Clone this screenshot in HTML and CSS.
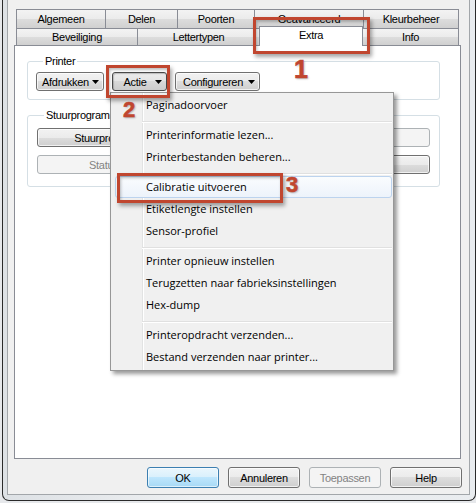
FILE: index.html
```html
<!DOCTYPE html>
<html lang="nl">
<head>
<meta charset="utf-8">
<title>Eigenschappen printer</title>
<link rel="stylesheet" href="styles.css">
</head>
<body>
<div class="window">
  <div class="dialog">
    <div class="tabctl">
      <div class="tabrow row1">
        <div class="tab w-alg">Algemeen</div>
        <div class="tab w-del">Delen</div>
        <div class="tab w-poo">Poorten</div>
        <div class="tab w-gea">Geavanceerd</div>
        <div class="tab w-kle">Kleurbeheer</div>
      </div>
      <div class="tabrow row2">
        <div class="tab w-bev">Beveiliging</div>
        <div class="tab w-let">Lettertypen</div>
        <div class="tab w-ext sel">Extra</div>
        <div class="tab w-inf">Info</div>
      </div>
      <div class="panel">
        <fieldset class="group g-printer">
          <legend>Printer</legend>
          <div class="btnrow">
            <button class="btn dd w-afd"><span class="lbl">Afdrukken</span><svg class="arr" width="7" height="4" viewBox="0 0 7 4"><polygon points="0,0 7,0 3.5,4" fill="#000"/></svg></button>
            <button class="btn dd w-act pressed"><span class="lbl">Actie</span><svg class="arr" width="7" height="4" viewBox="0 0 7 4"><polygon points="0,0 7,0 3.5,4" fill="#000"/></svg></button>
            <button class="btn dd w-con"><span class="lbl">Configureren</span><svg class="arr" width="7" height="4" viewBox="0 0 7 4"><polygon points="0,0 7,0 3.5,4" fill="#000"/></svg></button>
          </div>
        </fieldset>
        <fieldset class="group g-driver">
          <legend>Stuurprogramma</legend>
          <div class="grid2">
            <button class="btn">Stuurprogramma...</button>
            <button class="btn disabled">Opties...</button>
            <button class="btn disabled">Status lezen</button>
            <button class="btn">Bijwerken...</button>
          </div>
        </fieldset>
      </div>
    </div>
    <div class="footer">
      <button class="btn fbtn default">OK</button>
      <button class="btn fbtn">Annuleren</button>
      <button class="btn fbtn disabled">Toepassen</button>
      <button class="btn fbtn">Help</button>
    </div>
  </div>
</div>

<div class="menu">
  <div class="item">Paginadoorvoer</div>
  <div class="sep"></div>
  <div class="item">Printerinformatie lezen...</div>
  <div class="item">Printerbestanden beheren...</div>
  <div class="sep"></div>
  <div class="item hot">Calibratie uitvoeren</div>
  <div class="item">Etiketlengte instellen</div>
  <div class="item">Sensor-profiel</div>
  <div class="sep"></div>
  <div class="item">Printer opnieuw instellen</div>
  <div class="item">Terugzetten naar fabrieksinstellingen</div>
  <div class="item">Hex-dump</div>
  <div class="sep"></div>
  <div class="item">Printeropdracht verzenden...</div>
  <div class="item">Bestand verzenden naar printer...</div>
</div>

<div class="mark m1"></div>
<div class="mark m2"></div>
<div class="mark m3"></div>
<div class="num n1">1</div>
<div class="num n2">2</div>
<div class="num n3">3</div>
</body>
</html>
```
FILE: styles.css
```css
html, body {
  margin: 0;
  padding: 0;
}
body {
  position: relative;
  width: 476px;
  height: 503px;
  overflow: hidden;
  background: #e6e8eb;
  font-family: "Liberation Sans", Arial, sans-serif;
  font-size: 11px;
  letter-spacing: -0.3px;
  color: #000;
}
.window {
  margin-left: 2px;
  width: 474px;
  height: 501px;
  box-sizing: border-box;
  border: 1px solid #2a2a2a;
  border-top: 0;
  border-radius: 0 0 7px 7px;
  padding: 0 5px 5px 4px;
  background: linear-gradient(90deg, #dde1e5, #eef0f2 40%, #e9ecef);
}
.dialog {
  height: 100%;
  box-sizing: border-box;
  border: 1px solid #a2a6aa;
  border-top: 0;
  background: #f0f0f0;
  display: flex;
  flex-direction: column;
  padding: 9px 8px 0 6px;
}
.tabctl {
  width: 447px;
}
.tabrow {
  display: flex;
  padding-left: 2px;
}
.row2 {
  height: 17px;
  align-items: flex-end;
}
.tab {
  box-sizing: border-box;
  border: 1px solid #898c95;
  border-bottom: 0;
  margin-left: -1px;
  background: linear-gradient(#f3f3f3, #ebebeb 50%, #dddddd 50%, #d0d0d0);
  display: flex;
  align-items: center;
  justify-content: center;
  white-space: nowrap;
}
.tab:first-child { margin-left: 0; }
.row1 .tab { height: 19px; }
.row2 .tab { height: 17px; }
.w-alg { width: 90px; }
.w-del { width: 73px; }
.w-poo { width: 78px; }
.w-gea { width: 110px; }
.w-kle { width: 96px; }
.w-bev { width: 122px; }
.w-let { width: 123px; }
.w-ext { width: 104px; }
.w-inf { width: 97px; }
.row2 .tab.sel {
  height: 20px;
  margin-bottom: -1px;
  padding-bottom: 3px;
  background: #fff;
  position: relative;
  z-index: 1;
}
.panel {
  box-sizing: border-box;
  height: 414px;
  border: 1px solid #898c95;
  background: #fff;
  padding-top: 9px;
}
.group {
  margin: 0 20px 0 12px;
  border: 1px solid #d5dfe5;
  border-radius: 3px;
  min-width: 0;
}
.group legend {
  padding: 0 2px;
  margin-left: 7px;
  line-height: 13px;
}
.g-printer {
  padding: 4px 8px 8px 8px;
}
.g-driver {
  margin-top: 9px;
  padding: 6px 9px 12px 9px;
}
.btnrow {
  display: flex;
  gap: 8px;
}
.btn {
  box-sizing: border-box;
  height: 19px;
  margin: 0;
  padding: 0 4px;
  border: 1px solid #707070;
  border-radius: 3px;
  background: linear-gradient(#f2f2f2, #ebebeb 50%, #dddddd 50%, #cfcfcf);
  box-shadow: inset 0 0 0 1px rgba(255,255,255,0.7);
  font-family: "Liberation Sans", Arial, sans-serif;
  font-size: 11px;
  letter-spacing: -0.3px;
  color: #000;
  white-space: nowrap;
  overflow: hidden;
}
.dd {
  display: flex;
  align-items: center;
}
.dd .lbl {
  flex: 1;
  text-align: center;
}
.dd .arr {
  margin-left: 2px;
  flex: none;
}
.w-afd { width: 68px; }
.w-act { width: 55px; }
.w-con { width: 85px; }
.pressed {
  border-color: #4a4a4a;
  background: linear-gradient(#ebebeb, #e4e4e4 50%, #d8d8d8 50%, #cccccc);
  box-shadow: inset 1px 1px 1px rgba(0,0,0,0.2);
}
.btn.disabled {
  border-color: #adb2b5;
  background: #f4f4f4;
  box-shadow: none;
  color: #838383;
}
.grid2 {
  display: grid;
  grid-template-columns: 161px 1fr;
  gap: 8px;
}
.footer {
  display: flex;
  justify-content: flex-end;
  gap: 9px;
  margin-top: 8px;
  margin-right: -1px;
}
.fbtn {
  width: 72px;
  height: 21px;
}
.fbtn.default {
  border-color: #3c7fb1;
  background: linear-gradient(#eaf6fd, #d9f0fc 50%, #bee6fd 50%, #a7d9f5);
  box-shadow: inset 0 0 0 1px rgba(255,255,255,0.6);
}

/* context menu */
.menu {
  position: absolute;
  left: 110px;
  top: 92px;
  width: 284px;
  box-sizing: border-box;
  border: 1px solid #979797;
  padding: 1px 0 2px 0;
  background:
    linear-gradient(90deg, transparent 31px, #e2e3e3 31px, #e2e3e3 32px, #ffffff 32px, #ffffff 33px, transparent 33px),
    #f0f0f0;
  box-shadow: 3px 3px 4px rgba(0,0,0,0.4);
  font-family: "Open Sans", "Noto Sans", sans-serif;
  font-size: 11px;
  letter-spacing: 0;
  z-index: 5;
}
.item {
  height: 22px;
  box-sizing: border-box;
  margin: 0 1px 0 4px;
  padding-left: 30px;
  border: 1px solid transparent;
  border-radius: 3px;
  line-height: 20px;
  white-space: nowrap;
}
.item.hot {
  border-color: #bcd3ee;
  background: linear-gradient(#fafcfe, #edf3fb);
}
.sep {
  height: 8px;
  margin: 0 1px 0 31px;
  background: linear-gradient(transparent 5px, #e0e0e0 5px, #e0e0e0 6px, #ffffff 6px, #ffffff 7px, transparent 7px);
}

/* annotations */
.mark {
  position: absolute;
  box-sizing: border-box;
  border: 3px solid #c0462f;
  box-shadow: 2px 3px 4px rgba(0,0,0,0.35), inset 1px 2px 3px rgba(0,0,0,0.25);
  z-index: 10;
}
.m1 { left: 253px; top: 17px; width: 117px; height: 37px; }
.m2 { left: 106px; top: 65px; width: 64px; height: 33px; }
.m3 { left: 117px; top: 173px; width: 166px; height: 30px; }
.num {
  position: absolute;
  font-family: "Liberation Sans", Arial, sans-serif;
  font-weight: bold;
  color: #c0462f;
  line-height: 1;
  letter-spacing: 0;
  -webkit-text-stroke: 0.6px #c0462f;
  text-shadow: 1px 1px 2px rgba(0,0,0,0.3);
  z-index: 10;
}
.n1 { left: 294px; top: 57px; font-size: 25px; }
.n2 { left: 123px; top: 99px; font-size: 22px; }
.n3 { left: 286px; top: 174px; font-size: 22px; }
```
